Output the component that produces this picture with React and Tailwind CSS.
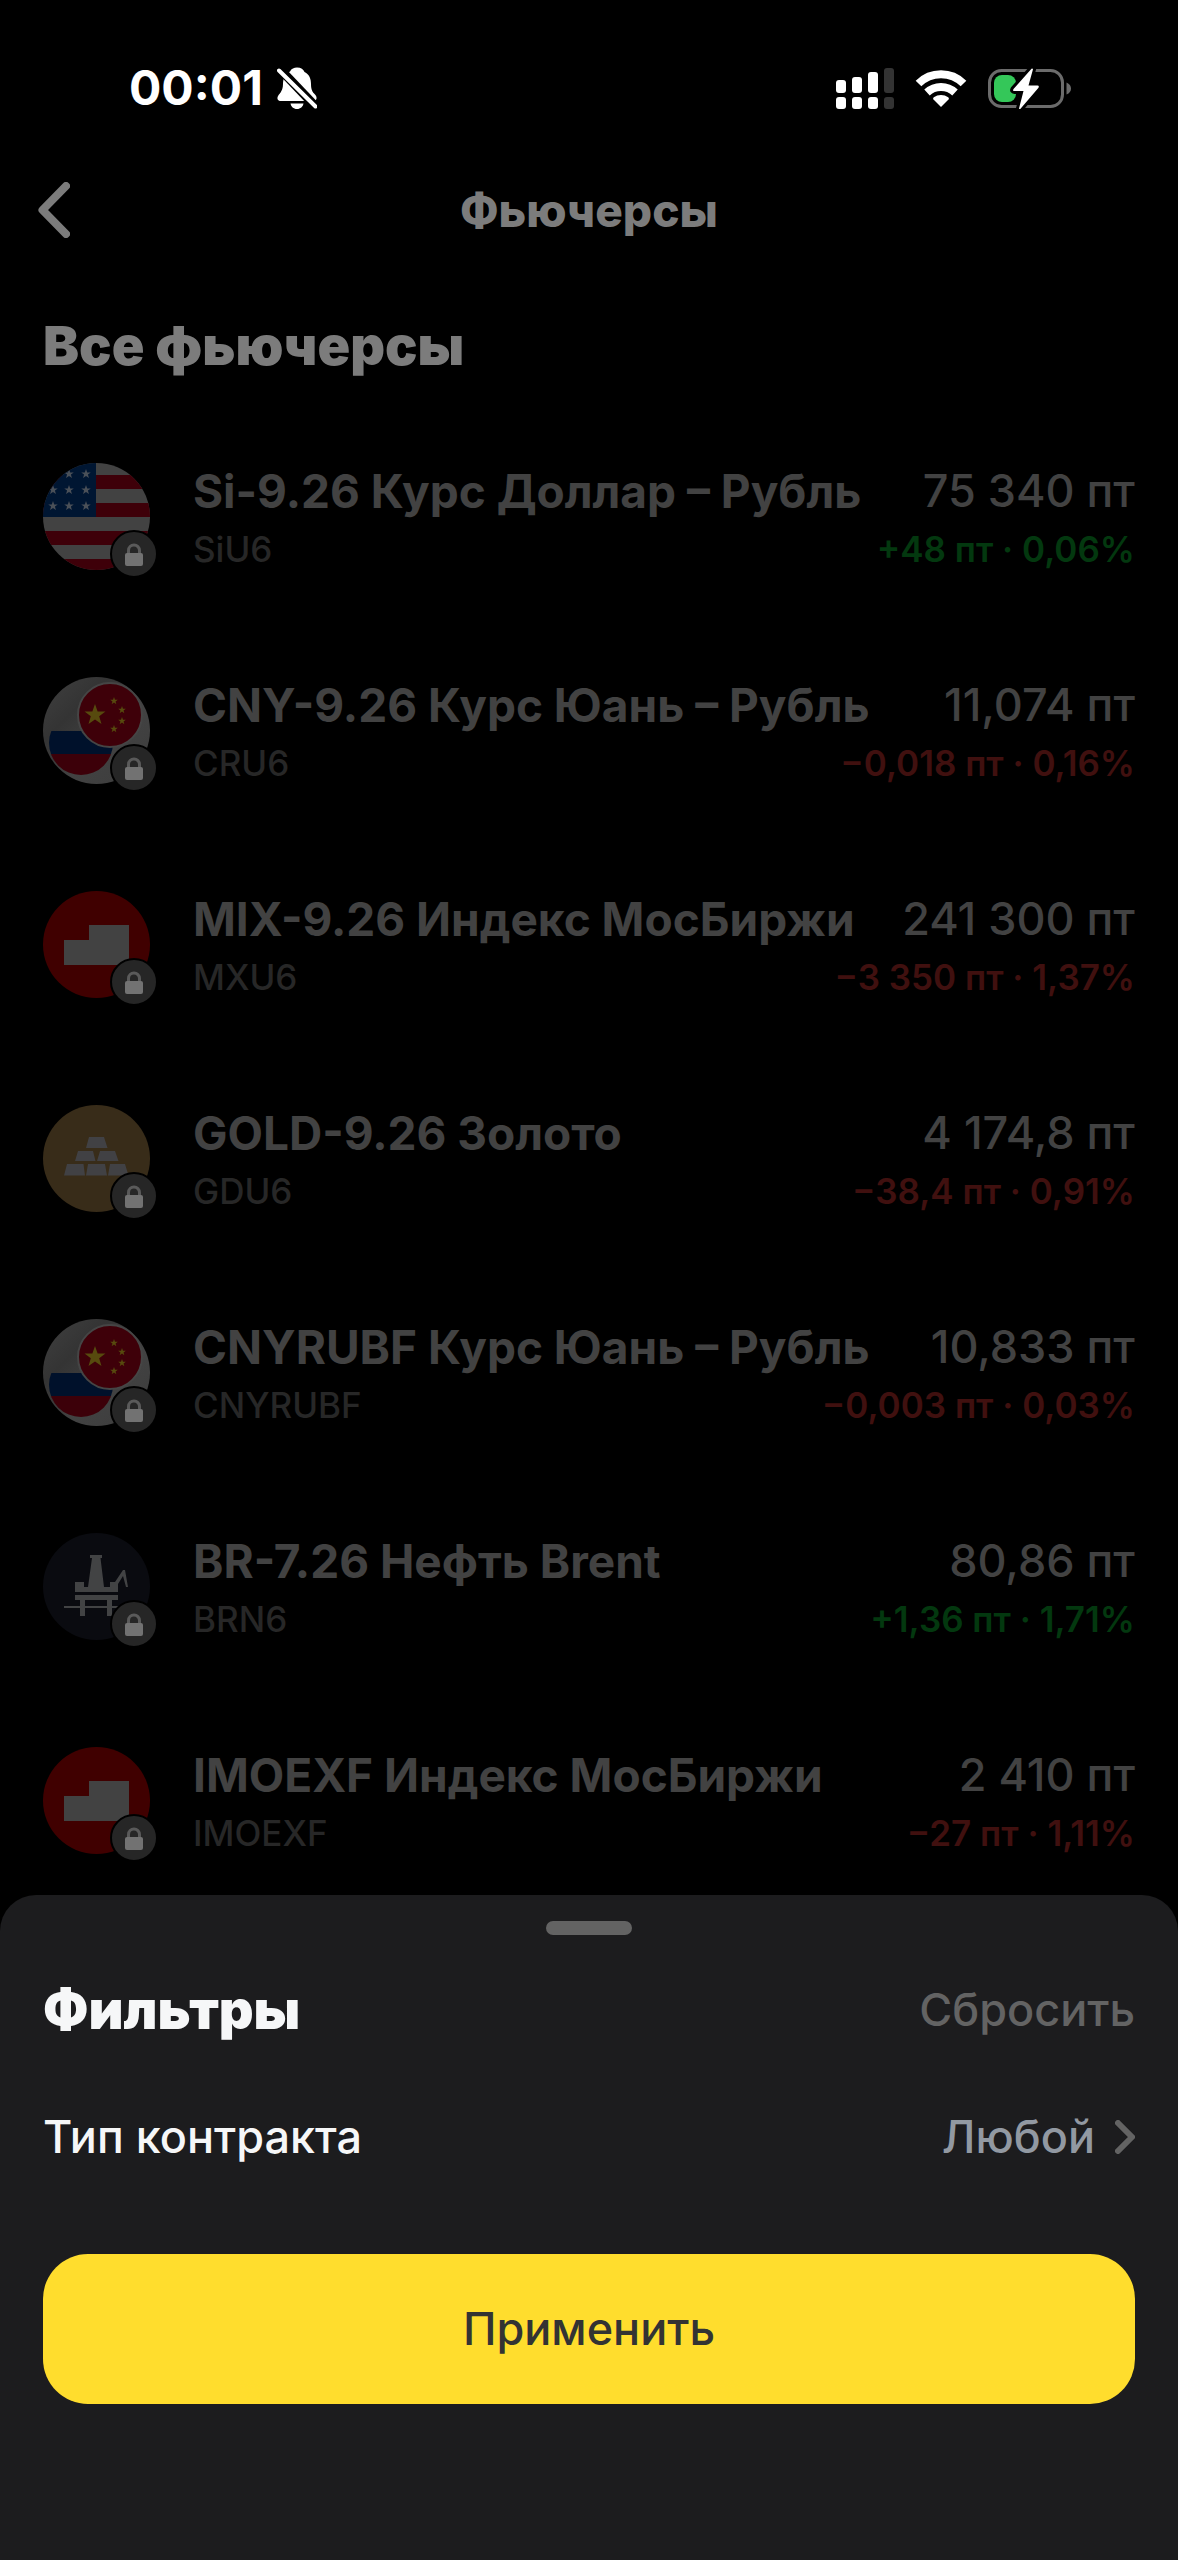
const futures = [
  { name: 'Si-9.26 Курс Доллар – Рубль', ticker: 'SiU6', icon: 'usd', price: '75 340 пт', change: '+48 пт · 0,06%', up: true },
  { name: 'CNY-9.26 Курс Юань – Рубль', ticker: 'CRU6', icon: 'cny', price: '11,074 пт', change: '−0,018 пт · 0,16%', up: false },
  { name: 'MIX-9.26 Индекс МосБиржи', ticker: 'MXU6', icon: 'moex', price: '241 300 пт', change: '−3 350 пт · 1,37%', up: false },
  { name: 'GOLD-9.26 Золото', ticker: 'GDU6', icon: 'gold', price: '4 174,8 пт', change: '−38,4 пт · 0,91%', up: false },
  { name: 'CNYRUBF Курс Юань – Рубль', ticker: 'CNYRUBF', icon: 'cny', price: '10,833 пт', change: '−0,003 пт · 0,03%', up: false },
  { name: 'BR-7.26 Нефть Brent', ticker: 'BRN6', icon: 'oil', price: '80,86 пт', change: '+1,36 пт · 1,71%', up: true },
  { name: 'IMOEXF Индекс МосБиржи', ticker: 'IMOEXF', icon: 'moex', price: '2 410 пт', change: '−27 пт · 1,11%', up: false },
];

const STAR = 'M0 -10 2.4 -3.2 9.5 -3.1 3.8 1.2 5.9 8.1 0 4 -5.9 8.1 -3.8 1.2 -9.5 -3.1 -2.4 -3.2Z';

function Star({ x, y, r, fill }) {
  return <path d={STAR} fill={fill} transform={`translate(${x} ${y}) scale(${r / 10})`} />;
}

function UsdLogo() {
  return (
    <>
      <rect width="107" height="107" fill="#424242" />
      <path fill="#3e0009" d="M0 12h107v14H0zM0 40h107v14H0zM0 68h107v14H0zM0 96h107v11H0z" />
      <rect width="53" height="54" fill="#001632" />
      {[11, 27, 43].map((y) =>
        [10, 26, 43].map((x) => <Star key={`${x}-${y}`} x={x} y={y} r={5} fill="#4a5058" />)
      )}
    </>
  );
}

function CnyLogo() {
  return (
    <>
      <defs>
        <linearGradient id="silver" x1="0" y1="0" x2="1" y2="1">
          <stop offset="0" stopColor="#404040" />
          <stop offset="0.3" stopColor="#343434" />
          <stop offset="0.6" stopColor="#424242" />
          <stop offset="1" stopColor="#3c3c3c" />
        </linearGradient>
        <clipPath id="rub">
          <circle cx="38" cy="66" r="32" />
        </clipPath>
      </defs>
      <rect width="107" height="107" fill="url(#silver)" />
      <g clipPath="url(#rub)">
        <rect y="54" width="107" height="23" fill="#00112b" />
        <rect y="77" width="107" height="30" fill="#3c0009" />
      </g>
      <circle cx="67" cy="38" r="32" fill="#3e0009" stroke="#454545" strokeWidth="2" />
      <Star x={52} y={38} r={11} fill="#574a0e" />
      <Star x={71} y={24} r={4} fill="#574a0e" />
      <Star x={79} y={33} r={4} fill="#574a0e" />
      <Star x={79} y={44} r={4} fill="#574a0e" />
      <Star x={71} y={52} r={4} fill="#574a0e" />
    </>
  );
}

function MoexLogo() {
  return (
    <>
      <rect width="107" height="107" fill="#400000" />
      <path fill="#424242" d="M21 49h25V34h40v40H21z" />
    </>
  );
}

function GoldLogo() {
  return (
    <>
      <rect width="107" height="107" fill="#382c19" />
      <path
        fill="#414144"
        d="M46 32h15l3.500 11h-21.500zM35 46h15l2.500 10h-20.500zM57 46h15l3.500 10h-21.500zM24 59h16.500l1.500 11.500h-21zM45 59h17l2 11.500h-21zM67 59h15l3.500 11.500h-20.500z"
      />
    </>
  );
}

function OilLogo() {
  return (
    <>
      <rect width="107" height="107" fill="#0a0b10" />
      <path
        fill="#424344"
        d="M47 22h12v3h-1.500l3.500 29h6v-5h5l8-12h2l3 17h-2l-3-11-5 8v8H32V49h9v5h4l4-29h-2zM32 62h43v5h-6v6h17v2H69v8h-5v-8H42v8h-5v-8H21v-2h16v-6h-5zM42 67v6h22v-6z"
      />
    </>
  );
}

const logos = { usd: UsdLogo, cny: CnyLogo, moex: MoexLogo, gold: GoldLogo, oil: OilLogo };

function FutureLogo({ icon }) {
  const Logo = logos[icon];
  return (
    <div className="relative size-[107px] shrink-0">
      <svg viewBox="0 0 107 107" className="size-full rounded-full" aria-hidden="true">
        <Logo />
      </svg>
      <span className="absolute -right-2 -bottom-2 flex size-12 items-center justify-center rounded-full border-2 border-black bg-[#262626]">
        <svg viewBox="0 0 18 23" className="h-[23px] w-[18px]" aria-hidden="true">
          <path d="M3.500 11V7.500a5.500 5.500 0 0 1 11 0V11" fill="none" stroke="#5a5a5a" strokeWidth="3" />
          <rect y="10" width="18" height="13" rx="2" fill="#727272" />
        </svg>
      </span>
    </div>
  );
}

function StatusBar() {
  return (
    <div className="flex h-[144px] items-center justify-between pt-8 pr-[107px] pl-[129px]">
      <div className="flex items-center gap-[14px]">
        <span className="text-[48px] leading-[56px] font-bold">00:01</span>
        <svg viewBox="0 0 40 42" className="h-[42px] w-[40px]" aria-hidden="true">
          <path
            fill="#fff"
            d="M13 4.500C14.500 1.500 17 .5 20 .5c4 0 6.500 2 7.500 4.500 5 2.500 6.500 7 6.500 12 0 6 1.500 8 4 10.500 2 2 2 4.500.8 5.500C38 34 37 34 36 34H4C1 34 0 32 .6 30 1.500 27 6 25 6 17c0-5 2-10 7-12.500zM13.500 36.500h13c-.5 3-3 5.500-6.500 5.500s-6-2.500-6.500-5.500z"
          />
          <path d="M0-1 41 42" stroke="#000" strokeWidth="9" />
          <path d="M2 3.500 38.500 39.500" stroke="#fff" strokeWidth="4" strokeLinecap="round" />
        </svg>
      </div>
      <div className="flex items-center gap-[21px]">
        <svg viewBox="0 0 58 41" className="h-[41px] w-[58px]" aria-hidden="true">
          <g fill="#fff">
            <rect y="12" width="10" height="13" rx="3" />
            <rect x="16" y="9" width="10" height="16" rx="3" />
            <rect x="32" y="4" width="10" height="21" rx="3" />
            <rect y="29" width="10" height="12" rx="3" />
            <rect x="16" y="29" width="10" height="12" rx="3" />
            <rect x="32" y="29" width="10" height="12" rx="3" />
          </g>
          <rect x="48" width="10" height="25" rx="3" fill="#333" />
          <rect x="48" y="29" width="10" height="12" rx="3" fill="#333" />
        </svg>
        <svg viewBox="0 0 52 38" className="h-[38px] w-[52px]" aria-hidden="true">
          <g fill="none" stroke="#fff" strokeWidth="8">
            <path d="M3.500 14.500a32 32 0 0 1 45 0" />
            <path d="M12 23.500a20.500 20.500 0 0 1 28 0" />
          </g>
          <path d="M26 38 18.500 30.500q-1-1.200.3-2.200a12 12 0 0 1 14.400 0q1.300 1 .3 2.200z" fill="#fff" />
        </svg>
        <svg viewBox="0 0 83 41" className="h-[41px] w-[83px]" aria-hidden="true">
          <rect x="1.500" y="2.500" width="73" height="36" rx="12" fill="none" stroke="#6b6b6b" strokeWidth="3" />
          <path d="M78.500 14.500q4.500 2 4.500 6t-4.500 6z" fill="#6b6b6b" />
          <rect x="6" y="7" width="22" height="27" rx="8" fill="#34c759" />
          <path
            d="M43.500.8 25.500 21q-1.200 2 1 2h9L31 40.500q.5 1.200 1.500.2l18-21q1-2-1-2.200h-9L45 1.300q-.5-1.200-1.500-.5z"
            fill="#fff"
            stroke="#000"
            strokeWidth="6"
            paintOrder="stroke"
          />
        </svg>
      </div>
    </div>
  );
}

export default function App() {
  return (
    <div className="flex min-h-screen flex-col bg-black font-['Inter','Liberation_Sans',sans-serif] text-white">
      <StatusBar />

      <header className="grid h-[132px] grid-cols-[1fr_auto_1fr] items-center px-[38px] text-[#7c7c7c]">
        <button type="button" aria-label="Назад" className="justify-self-start">
          <svg viewBox="0 0 32 56" className="h-14 w-8" aria-hidden="true">
            <path d="M28 4 4.500 28 28 52" fill="none" stroke="currentColor" strokeWidth="8" strokeLinecap="round" strokeLinejoin="round" />
          </svg>
        </button>
        <h1 className="text-[46px] leading-[54px] font-extrabold">Фьючерсы</h1>
      </header>

      <main className="px-[43px] pb-[41px]">
        <h2 className="mt-10 text-[54px] leading-[60px] font-black text-[#7c7c7c]">Все фьючерсы</h2>

        <ul className="mt-[87px] flex flex-col gap-[107px]">
          {futures.map((item) => (
            <li key={item.name} className="flex h-[107px] text-[#424242]">
              <FutureLogo icon={item.icon} />
              <div className="ml-[43px] flex-1">
                <div className="flex justify-between gap-8 leading-[56px] whitespace-nowrap">
                  <span className="text-[46px] font-bold">{item.name}</span>
                  <span className="text-[45px] font-medium">{item.price}</span>
                </div>
                <div className="mt-2 flex justify-between text-[35px] leading-[44px] whitespace-nowrap">
                  <span className="font-medium text-[#272727]">{item.ticker}</span>
                  <span className={`font-semibold ${item.up ? 'text-[#03380f]' : 'text-[#40100f]'}`}>{item.change}</span>
                </div>
              </div>
            </li>
          ))}
        </ul>
      </main>

      <section className="flex-1 rounded-t-[36px] bg-[#1c1c1e] px-[43px] pt-[26px]">
        <div className="mx-auto h-[14px] w-[86px] rounded-full bg-[#636363]" />

        <div className="mt-[45px] flex items-center justify-between">
          <h2 className="text-[54px] leading-[60px] font-black text-[#f6f7f8]">Фильтры</h2>
          <button type="button" className="text-[45px] leading-[54px] font-medium text-[#636363]">
            Сбросить
          </button>
        </div>

        <button type="button" className="mt-[70px] flex w-full items-center justify-between text-[45px] leading-[54px] font-medium">
          <span className="text-[#f6f7f8]">Тип контракта</span>
          <span className="flex items-center gap-5 text-[#9299a2]">
            Любой
            <svg viewBox="0 0 20 34" className="h-[34px] w-5 text-[#636363]" aria-hidden="true">
              <path d="M3 3 17 17 3 31" fill="none" stroke="currentColor" strokeWidth="6" strokeLinecap="round" strokeLinejoin="round" />
            </svg>
          </span>
        </button>

        <button type="button" className="mt-[90px] h-[150px] w-full rounded-[45px] bg-[#ffdd2d] text-[45px] leading-[54px] font-medium text-[#333]">
          Применить
        </button>
      </section>
    </div>
  );
}
